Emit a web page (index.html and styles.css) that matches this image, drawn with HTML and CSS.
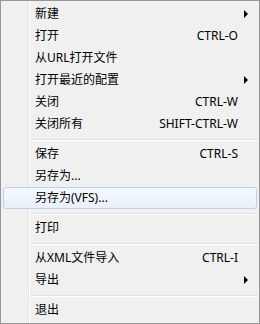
FILE: index.html
```html
<!DOCTYPE html>
<html>
	<head>
		<meta charset="utf-8" />
		<title>文件菜单</title>
		<link rel="stylesheet" href="styles.css">
	</head>
	<body>
		<div class="menu">
			<div class="item"><span class="label">新建</span><span class="arrow"><i></i></span></div>
			<div class="item"><span class="label">打开</span><span class="key">CTRL-O</span><span class="arrow"></span></div>
			<div class="item"><span class="label">从URL打开文件</span><span class="arrow"></span></div>
			<div class="item"><span class="label">打开最近的配置</span><span class="arrow"><i></i></span></div>
			<div class="item"><span class="label">关闭</span><span class="key">CTRL-W</span><span class="arrow"></span></div>
			<div class="item"><span class="label">关闭所有</span><span class="key">SHIFT-CTRL-W</span><span class="arrow"></span></div>
			<div class="sep"></div>
			<div class="item"><span class="label">保存</span><span class="key">CTRL-S</span><span class="arrow"></span></div>
			<div class="item"><span class="label">另存为...</span><span class="arrow"></span></div>
			<div class="item hover"><span class="label">另存为(VFS)...</span><span class="arrow"></span></div>
			<div class="sep"></div>
			<div class="item"><span class="label">打印</span><span class="arrow"></span></div>
			<div class="sep"></div>
			<div class="item"><span class="label">从XML文件导入</span><span class="key">CTRL-I</span><span class="arrow"></span></div>
			<div class="item"><span class="label">导出</span><span class="arrow"><i></i></span></div>
			<div class="sep"></div>
			<div class="item"><span class="label">退出</span><span class="arrow"></span></div>
		</div>
	</body>
</html>
```

FILE: styles.css
```css
html,body{margin:0;padding:0}
body{
	font-family:"Noto Sans","Noto Sans CJK SC",sans-serif;
	font-size:12px;
	color:#000;
}
.menu{
	width:260px;
	height:324px;
	box-sizing:border-box;
	border:1px solid #979797;
	padding:2px;
	background:#f0f0f0 linear-gradient(to right,transparent 27px,#e2e3e3 27px,#e2e3e3 28px,#fff 28px,#fff 29px,transparent 29px);
}
.menu .item{
	display:flex;
	align-items:center;
	height:22px;
	box-sizing:border-box;
	border:1px solid transparent;
	border-radius:3px;
	padding-left:31px;
	line-height:20px;
	white-space:nowrap;
}
.menu .item.hover{
	border-color:#b9d2ee;
	background:linear-gradient(to bottom,#f5f8fd,#e9f0fa);
}
.menu .label{
	flex:1;
}
.menu .key{
	text-align:right;
}
.menu .arrow{
	width:18px;
	display:flex;
	align-items:center;
}
.menu .arrow i{
	margin-left:6px;
	width:0;
	height:0;
	border-left:4px solid #000;
	border-top:4px solid transparent;
	border-bottom:4px solid transparent;
}
.menu .sep{
	height:8px;
	box-sizing:border-box;
	margin-left:27px;
	padding-top:4px;
}
.menu .sep:after{
	content:"";
	display:block;
	height:1px;
	border-top:1px solid #e0e0e0;
	background:#fff;
}
```
